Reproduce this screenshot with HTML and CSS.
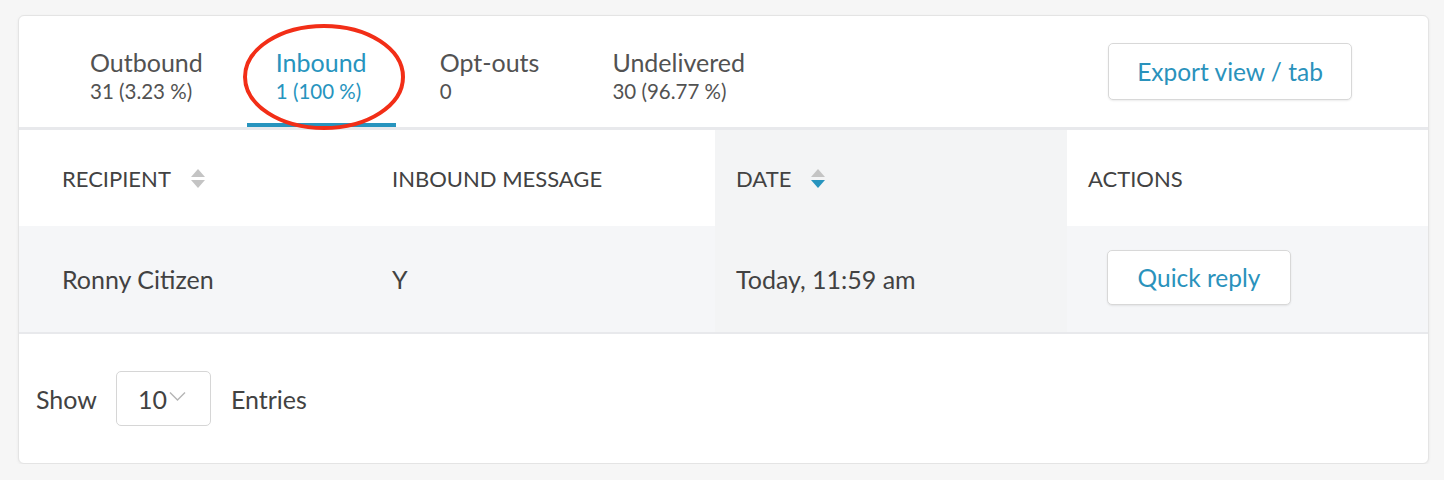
FILE: index.html
```html
<!DOCTYPE html>
<html lang="en">
<head>
<meta charset="utf-8">
<title>Messages</title>
<link rel="stylesheet" href="styles.css">
</head>
<body>
<div class="card">
  <div class="tabbar">
    <div class="tab"><div class="tab-title">Outbound</div><div class="tab-sub">31 (3.23 %)</div></div>
    <div class="tab active"><div class="tab-title">Inbound</div><div class="tab-sub">1 (100 %)</div></div>
    <div class="tab"><div class="tab-title">Opt-outs</div><div class="tab-sub">0</div></div>
    <div class="tab"><div class="tab-title">Undelivered</div><div class="tab-sub">30 (96.77 %)</div></div>
    <button class="btn export">Export view / tab</button>
    <svg class="annot" width="170" height="114" viewBox="0 0 170 114"><ellipse cx="85" cy="57" rx="79" ry="51" fill="none" stroke="#f22e17" stroke-width="4"/></svg>
  </div>
  <table class="grid">
    <colgroup><col class="c1"><col class="c2"><col class="c3"><col class="c4"></colgroup>
    <thead>
      <tr>
        <th class="first"><span class="th-in">RECIPIENT <span class="sort"><span class="up"></span><span class="down"></span></span></span></th>
        <th>INBOUND MESSAGE</th>
        <th class="sorted"><span class="th-in">DATE <span class="sort"><span class="up"></span><span class="down on"></span></span></span></th>
        <th>ACTIONS</th>
      </tr>
    </thead>
    <tbody>
      <tr>
        <td class="first">Ronny Citizen</td>
        <td>Y</td>
        <td class="sorted">Today, 11:59 am</td>
        <td><button class="btn reply">Quick reply</button></td>
      </tr>
    </tbody>
  </table>
  <div class="footer">
    <span class="lbl">Show</span>
    <div class="select"><span>10</span><svg width="17" height="11" viewBox="0 0 17 11"><path d="M1 1.5 L8.5 9 L16 1.5" fill="none" stroke="#b5b5b5" stroke-width="1.4"/></svg></div>
    <span class="lbl">Entries</span>
  </div>
</div>
</body>
</html>
```
FILE: styles.css
```css
* { box-sizing: border-box; }
html, body { margin: 0; }
body {
  background: #f6f6f6;
  padding: 15px 0 0 18px;
  font-family: Lato, "Open Sans", sans-serif;
  color: #424242;
}
.card {
  width: 1411px;
  height: 449px;
  background: #fff;
  border: 1px solid #e4e4e4;
  border-radius: 6px;
  box-shadow: 0 1px 3px rgba(0,0,0,0.06);
  overflow: hidden;
}
.tabbar {
  position: relative;
  display: flex;
  padding-left: 42px;
  border-bottom: 3px solid #e8e9ec;
  height: 114px;
}
.tab {
  padding: 31px 29px 0;
  margin-right: 15px;
  border-bottom: 4px solid transparent;
  margin-bottom: -3px;
  height: 111px;
}
.tab-title { font-size: 25px; line-height: 30px; color: #525252; }
.tab-sub { font-size: 20.5px; line-height: 24px; margin-top: 2px; color: #525252; }
.tab.active { border-bottom-color: #2794be; }
.tab.active .tab-title, .tab.active .tab-sub { color: #2794be; }
.btn {
  font-family: Lato, "Open Sans", sans-serif;
  font-size: 24.5px;
  color: #2a92bc;
  background: #fff;
  border: 1.5px solid #d8d8d8;
  border-radius: 5px;
  box-shadow: 0 1px 2px rgba(0,0,0,0.08);
}
.export {
  margin-left: auto;
  margin-right: 76px;
  margin-top: 27px;
  width: 244px;
  height: 57px;
}
.annot { position: absolute; left: 220px; top: 4px; }
.grid {
  width: 100%;
  border-collapse: collapse;
  table-layout: fixed;
}
.c1 { width: 352px; }
.c2 { width: 344px; }
.c3 { width: 352px; }
.grid th {
  height: 96px;
  text-align: left;
  font-weight: normal;
  font-size: 22px;
  color: #424242;
  padding: 0 21px;
}
.grid td {
  height: 107px;
  background: #f5f6f8;
  font-size: 25px;
  color: #424242;
  padding: 0 21px;
  border-bottom: 2px solid #e8e9ec;
}
.grid .first { padding-left: 43px; }
.grid th.sorted, .grid td.sorted { background: #f3f4f5; }
.th-in { display: inline-flex; align-items: center; }
.sort { display: inline-flex; flex-direction: column; gap: 3px; margin-left: 20px; }
.up, .down { width: 0; height: 0; border-left: 7px solid transparent; border-right: 7px solid transparent; }
.up { border-bottom: 8px solid #c4c4c4; }
.down { border-top: 8px solid #c4c4c4; }
.down.on { border-top-color: #2794be; }
.reply { width: 184px; height: 55px; margin-left: 19px; margin-top: -3px; }
.footer {
  display: flex;
  align-items: center;
  padding: 37px 0 0 17px;
}
.lbl { font-size: 25px; color: #424242; }
.select {
  margin: 0 20px 0 19px;
  width: 95px;
  height: 55px;
  border: 1.5px solid #d6d6d6;
  border-radius: 5px;
  display: flex;
  align-items: center;
  padding-left: 21px;
  gap: 2px;
  font-size: 25px;
  color: #424242;
}
.select svg { margin-top: -4px; }
```
